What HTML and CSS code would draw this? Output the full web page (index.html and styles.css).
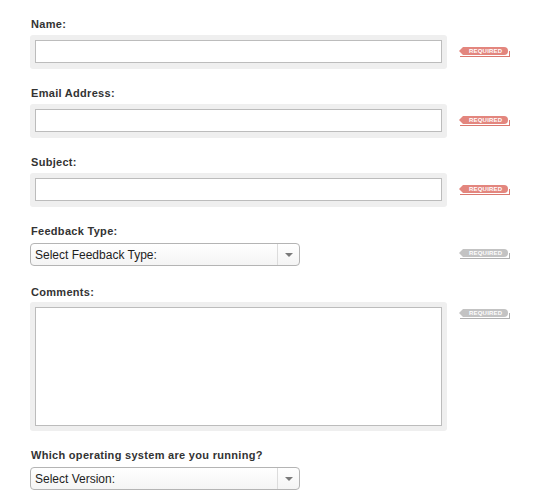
FILE: index.html
```html
<!DOCTYPE html>
<html>
<head>
<meta charset="utf-8">
<link rel="stylesheet" href="styles.css">
</head>
<body>
<form class="form">
  <div class="group">
    <label class="label">Name:</label>
    <div class="row">
      <div class="well"><div class="input"></div></div>
      <span class="badge badge--red badge--input">REQUIRED</span>
    </div>
  </div>
  <div class="group">
    <label class="label">Email Address:</label>
    <div class="row">
      <div class="well"><div class="input"></div></div>
      <span class="badge badge--red badge--input">REQUIRED</span>
    </div>
  </div>
  <div class="group">
    <label class="label">Subject:</label>
    <div class="row">
      <div class="well"><div class="input"></div></div>
      <span class="badge badge--red badge--input">REQUIRED</span>
    </div>
  </div>
  <div class="group group--select">
    <label class="label">Feedback Type:</label>
    <div class="row">
      <div class="select"><span class="select-value">Select Feedback Type:</span><span class="select-arrow"></span></div>
      <span class="badge badge--grey badge--select">REQUIRED</span>
    </div>
  </div>
  <div class="group group--area">
    <label class="label">Comments:</label>
    <div class="row">
      <div class="well well--area"><div class="input input--area"></div></div>
      <span class="badge badge--grey badge--area">REQUIRED</span>
    </div>
  </div>
  <div class="group group--select">
    <label class="label">Which operating system are you running?</label>
    <div class="row">
      <div class="select"><span class="select-value">Select Version:</span><span class="select-arrow"></span></div>
    </div>
  </div>
</form>
</body>
</html>
```
FILE: styles.css
```css
html, body {
  margin: 0;
  padding: 0;
  background: #fff;
}
.form {
  padding: 18px 0 0 30px;
  font-family: "Liberation Sans", Arial, sans-serif;
}
.group {
  margin-bottom: 18px;
}
.group--select {
  margin-bottom: 20px;
}
.label {
  display: block;
  padding-left: 1px;
  font-size: 11px;
  font-weight: bold;
  line-height: 13px;
  letter-spacing: 0.3px;
  color: #333;
  margin-bottom: 4px;
}
.group--select .label {
  margin-bottom: 5px;
}
.group--area .label {
  margin-bottom: 3px;
}
.row {
  display: grid;
  grid-template-columns: 429px 60px;
  align-items: start;
}
.well {
  width: 407px;
  padding: 5px 5px 6px;
  background: #efefef;
  border-radius: 3px;
}
.well--area {
  padding-bottom: 5px;
}
.input {
  height: 21px;
  border: 1px solid #bcbcbc;
  background: #fff;
}
.input--area {
  height: 117px;
}
.select {
  width: 268px;
  height: 21px;
  border: 1px solid #b4b4b4;
  border-radius: 4px;
  background: linear-gradient(#ffffff, #f4f4f4);
  display: flex;
  align-items: center;
}
.select-value {
  flex: 1;
  padding-left: 4px;
  font-size: 12px;
  color: #1e1e1e;
}
.select-arrow {
  width: 21px;
  height: 21px;
  border-left: 1px solid #dcdcdc;
  display: flex;
  align-items: center;
  justify-content: center;
}
.select-arrow::after {
  content: "";
  border-left: 4px solid transparent;
  border-right: 4px solid transparent;
  border-top: 4px solid #7a7a7a;
}
.badge {
  position: relative;
  z-index: 0;
  display: block;
  justify-self: start;
  box-sizing: border-box;
  width: 51px;
  height: 10px;
  padding-left: 10px;
  font-size: 6px;
  font-weight: bold;
  line-height: 8px;
  letter-spacing: 0.2px;
  color: #fff;
  text-align: left;
}
.badge::before {
  content: "";
  position: absolute;
  left: 0;
  top: 0;
  width: 49px;
  height: 8px;
  border-radius: 0 4px 4px 0;
  clip-path: polygon(4px 0, 100% 0, 100% 100%, 4px 100%, 0 50%);
  background: var(--badge-bg);
  z-index: -1;
}
.badge::after {
  content: "";
  position: absolute;
  left: 1px;
  right: 0;
  top: 4px;
  bottom: 0;
  border-right: 1px solid var(--badge-line);
  border-bottom: 1px solid var(--badge-line);
}
.badge--red {
  --badge-bg: #e3867e;
  --badge-line: #d9786f;
}
.badge--grey {
  --badge-bg: #c3c3c3;
  --badge-line: #b0b0b0;
}
.badge--input {
  margin-top: 12px;
}
.badge--select {
  margin-top: 6px;
}
.badge--area {
  margin-top: 7px;
}
```
